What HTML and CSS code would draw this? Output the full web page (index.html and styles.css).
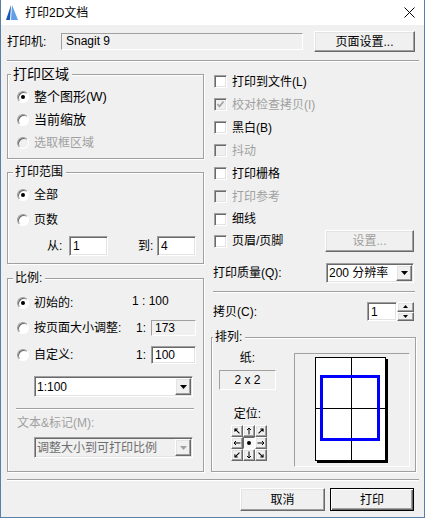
FILE: index.html
```html
<!DOCTYPE html>
<html lang="zh-CN">
<head>
<meta charset="utf-8">
<title>打印2D文档</title>
<link rel="stylesheet" href="styles.css">
</head>
<body>
<div class="window">
  <div class="titlebar">
    <svg class="app-icon" width="14" height="15" viewBox="0 0 14 15">
      <path d="M6 0 L1 15 L5 15 Z" fill="#1a56b8"/>
      <path d="M7 0 L13 15 L6 15 Z" fill="#62a0e6"/>
    </svg>
    <span class="title">打印2D文档</span>
    <svg class="close-x" width="11" height="11" viewBox="0 0 11 11"><path d="M0.5 0.5L10.5 10.5M10.5 0.5L0.5 10.5" stroke="#000" stroke-width="1"/></svg>
  </div>
  <div class="dialog">
    <div class="printer-row">
      <span class="printer-label">打印机:</span>
      <div class="printer-field">Snagit 9</div>
      <div class="btn btn-setup">页面设置...</div>
    </div>
    <div class="sep sep-top"></div>
    <div class="main">
      <div class="col-left">
        <div class="group g-area">
          <div class="legend legend-lg">打印区域</div>
          <div class="gbody gbody-area">
            <div class="row r23 big"><span class="radio on"></span>整个图形(W)</div>
            <div class="row r23 big"><span class="radio"></span>当前缩放</div>
            <div class="row r23 disabled"><span class="radio"></span>选取框区域</div>
          </div>
        </div>
        <div class="group g-range">
          <div class="legend">打印范围</div>
          <div class="gbody gbody-range">
            <div class="row h24"><span class="radio on"></span>全部</div>
            <div class="row h25"><span class="radio"></span>页数</div>
            <div class="range-row">
              <span class="from-label">从:</span>
              <div class="input w39">1</div>
              <span class="to-label">到:</span>
              <div class="input w39">4</div>
            </div>
          </div>
        </div>
        <div class="group g-scale">
          <div class="legend">比例:</div>
          <div class="gbody gbody-scale">
            <div class="srow h24">
              <span class="slabel"><span class="radio on"></span>初始的:</span>
              <span class="ratio-text">1 : 100</span>
            </div>
            <div class="srow h26">
              <span class="slabel"><span class="radio"></span>按页面大小调整:</span>
              <span class="one">1:</span>
              <div class="field-dis">173</div>
            </div>
            <div class="srow h28">
              <span class="slabel"><span class="radio"></span>自定义:</span>
              <span class="one">1:</span>
              <div class="input h18">100</div>
            </div>
            <div class="combo combo-scale">
              <span class="val">1:100</span>
              <span class="btn drop"><svg width="7" height="4" viewBox="0 0 7 4"><path d="M0 0H7L3.5 4Z" fill="#000"/></svg></span>
            </div>
            <div class="gsep"></div>
            <div class="text-mark">文本&amp;标记(M):</div>
            <div class="combo combo-scale combo-dis">
              <span class="val">调整大小到可打印比例</span>
              <span class="btn drop"><svg width="7" height="4" viewBox="0 0 7 4"><path d="M0 0H7L3.5 4Z" fill="#a0a0a0"/></svg></span>
            </div>
          </div>
        </div>
      </div>
      <div class="col-right">
        <div class="checks">
          <div class="crow"><span class="cb"></span>打印到文件(L)</div>
          <div class="crow disabled"><span class="cb"><svg width="9" height="9" viewBox="0 0 9 9"><path d="M1.5 4 L3.5 6.5 L7.5 1.5" fill="none" stroke="#a0a0a0" stroke-width="1.6"/></svg></span>校对检查拷贝(I)</div>
          <div class="crow"><span class="cb"></span>黑白(B)</div>
          <div class="crow disabled"><span class="cb"></span>抖动</div>
          <div class="crow"><span class="cb"></span>打印栅格</div>
          <div class="crow disabled"><span class="cb"></span>打印参考</div>
          <div class="crow h22"><span class="cb"></span>细线</div>
          <div class="crow h22"><span class="cb"></span>页眉/页脚<div class="btn btn-hf disabled">设置...</div></div>
        </div>
        <div class="quality-row">
          <span>打印质量(Q):</span>
          <div class="combo combo-q">
            <span class="val">200 分辨率</span>
            <span class="btn drop"><svg width="7" height="4" viewBox="0 0 7 4"><path d="M0 0H7L3.5 4Z" fill="#000"/></svg></span>
          </div>
        </div>
        <div class="sep sep-right"></div>
        <div class="copy-row">
          <span>拷贝(C):</span>
          <div class="spin">
            <div class="input spin-input">1</div>
            <div class="spin-btns">
              <span class="btn"><svg width="5" height="3" viewBox="0 0 5 3"><path d="M0 3H5L2.5 0Z" fill="#000"/></svg></span>
              <span class="btn"><svg width="5" height="3" viewBox="0 0 5 3"><path d="M0 0H5L2.5 3Z" fill="#000"/></svg></span>
            </div>
          </div>
        </div>
        <div class="group g-arrange">
          <div class="legend legend-arr">排列:</div>
          <div class="arr-body">
            <div class="arr-left">
              <div class="paper-label">纸:</div>
              <div class="paper-box">2 x 2</div>
              <div class="pos-label">定位:</div>
              <div class="pos-grid">
                <span class="btn pos"><svg width="8" height="8" viewBox="0 0 8 8"><g transform="rotate(-45 4 4)"><path d="M4 7.5V1M2 3L4 1L6 3" fill="none" stroke="#000"/></g></svg></span>
                <span class="btn pos"><svg width="8" height="8" viewBox="0 0 8 8"><path d="M4 7.5V1M2 3L4 1L6 3" fill="none" stroke="#000"/></svg></span>
                <span class="btn pos"><svg width="8" height="8" viewBox="0 0 8 8"><g transform="rotate(45 4 4)"><path d="M4 7.5V1M2 3L4 1L6 3" fill="none" stroke="#000"/></g></svg></span>
                <span class="btn pos"><svg width="8" height="8" viewBox="0 0 8 8"><g transform="rotate(-90 4 4)"><path d="M4 7.5V1M2 3L4 1L6 3" fill="none" stroke="#000"/></g></svg></span>
                <span class="pos pos-on"><svg width="8" height="8" viewBox="0 0 8 8"><circle cx="4" cy="4" r="2" fill="#000"/></svg></span>
                <span class="btn pos"><svg width="8" height="8" viewBox="0 0 8 8"><g transform="rotate(90 4 4)"><path d="M4 7.5V1M2 3L4 1L6 3" fill="none" stroke="#000"/></g></svg></span>
                <span class="btn pos"><svg width="8" height="8" viewBox="0 0 8 8"><g transform="rotate(-135 4 4)"><path d="M4 7.5V1M2 3L4 1L6 3" fill="none" stroke="#000"/></g></svg></span>
                <span class="btn pos"><svg width="8" height="8" viewBox="0 0 8 8"><g transform="rotate(180 4 4)"><path d="M4 7.5V1M2 3L4 1L6 3" fill="none" stroke="#000"/></g></svg></span>
                <span class="btn pos"><svg width="8" height="8" viewBox="0 0 8 8"><g transform="rotate(135 4 4)"><path d="M4 7.5V1M2 3L4 1L6 3" fill="none" stroke="#000"/></g></svg></span>
              </div>
            </div>
            <div class="preview">
              <svg width="114" height="112" viewBox="0 0 114 112">
                <rect x="22" y="5" width="71" height="104" fill="#000"/>
                <rect x="20.5" y="3.5" width="70" height="103" fill="#fff" stroke="#000"/>
                <path d="M56.5 3.5V106.5M20.5 54.5H90.5" stroke="#000"/>
                <rect x="26.5" y="22.5" width="57" height="63" fill="none" stroke="#0000ff" stroke-width="3"/>
              </svg>
            </div>
          </div>
        </div>
      </div>
    </div>
    <div class="sep sep-bottom"></div>
    <div class="actions">
      <div class="btn btn-cancel">取消</div>
      <div class="btn btn-default">打印</div>
    </div>
  </div>
</div>
</body>
</html>
```

FILE: styles.css
```css
* { box-sizing: border-box; }
body {
  margin: 0;
  font-family: "Liberation Sans", "Noto Sans CJK SC", sans-serif;
  font-size: 12px;
  line-height: 14px;
  color: #000;
  background: #f0f0f0;
}
.window {
  width: 425px;
  height: 518px;
  border: 1px solid #5b80a8;
  border-top: none;
  background: #f0f0f0;
  display: flex;
  flex-direction: column;
}
.titlebar {
  height: 25px;
  flex-shrink: 0;
  background: #fff;
  display: flex;
  align-items: center;
}
.app-icon { margin-left: 4px; }
.title { margin-left: 6px; }
.close-x { margin-left: auto; margin-right: 9px; }

.dialog {
  padding: 0 5px 0 6px;
  display: flex;
  flex-direction: column;
}
.printer-row {
  margin-top: 6px;
  height: 21px;
  display: flex;
  align-items: center;
}
.printer-label { width: 54px; }
.printer-field {
  width: 242px;
  height: 17px;
  border: 1px solid;
  border-color: #a0a0a0 #fff #fff #a0a0a0;
  padding-left: 4px;
  line-height: 15px;
}
.btn {
  background: #f0f0f0;
  border: 1px solid;
  border-color: #fff #696969 #696969 #fff;
  box-shadow: inset -1px -1px 0 #a0a0a0, inset 1px 1px 0 #e3e3e3;
  display: flex;
  align-items: center;
  justify-content: center;
}
.btn-setup { margin-left: 11px; width: 101px; height: 21px; }

.sep {
  height: 2px;
  border-top: 1px solid #a0a0a0;
  border-bottom: 1px solid #fff;
}
.sep-top { margin-top: 8px; }
.sep-bottom { margin-top: 7px; }

.main { display: flex; gap: 7px; }
.col-left { width: 197px; }
.col-right { width: 205px; }

.group {
  border: 1px solid #a0a0a0;
  box-shadow: 1px 1px 0 #fff, inset 1px 1px 0 #fff;
}
.legend {
  width: fit-content;
  height: 14px;
  margin: -8px 0 0 5px;
  padding: 0 3px 0 2px;
  background: #f0f0f0;
}
.legend-lg { font-size: 14px; margin-left: 3px; }
.legend-arr { margin-left: 1px; }

.g-area { margin-top: 12px; }
.gbody-area { padding: 4px 0 4px 9px; }
.row { display: flex; align-items: center; }
.r23 { height: 23px; }
.h24 { height: 24px; }
.h25 { height: 25px; }
.h26 { height: 26px; }
.h28 { height: 28px; }
.big { font-size: 13px; }
.disabled { color: #a0a0a0; }

.radio {
  width: 12px;
  height: 12px;
  flex-shrink: 0;
  border-radius: 50%;
  background: #fff;
  border: 1px solid;
  border-color: #a0a0a0 #fff #fff #a0a0a0;
  box-shadow: inset 1px 1px 0 #696969;
  margin-right: 5px;
  display: flex;
  align-items: center;
  justify-content: center;
}
.radio.on::after {
  content: "";
  width: 4px;
  height: 4px;
  border-radius: 50%;
  background: #000;
}
.disabled .radio { background: #f0f0f0; }

.g-range { margin-top: 13px; }
.gbody-range { padding: 4px 7px 7px 9px; }
.range-row {
  margin-top: 4px;
  height: 20px;
  display: flex;
  align-items: center;
}
.from-label { margin-left: 30px; width: 22px; }
.to-label { margin-left: 30px; width: 19px; }
.input {
  height: 20px;
  background: #fff;
  border: 1px solid;
  border-color: #a0a0a0 #fff #fff #a0a0a0;
  box-shadow: inset 1px 1px 0 #696969, inset -1px -1px 0 #e3e3e3;
  padding-left: 3px;
  display: flex;
  align-items: center;
}
.w39 { width: 39px; }
.input.h18 { height: 18px; }

.g-scale { margin-top: 14px; }
.gbody-scale { padding: 6px 7px 13px 9px; }
.srow {
  display: grid;
  grid-template-columns: 1fr 15px 45px;
  align-items: center;
}
.slabel { display: flex; align-items: center; }
.ratio-text { grid-column: 2 / 4; margin-left: -4px; margin-top: -4px; }
.field-dis {
  height: 16px;
  border: 1px solid;
  border-color: #a0a0a0 #fff #fff #a0a0a0;
  padding-left: 3px;
  line-height: 14px;
}
.combo {
  height: 21px;
  background: #fff;
  border: 1px solid;
  border-color: #a0a0a0 #fff #fff #a0a0a0;
  box-shadow: inset 1px 1px 0 #696969, inset -1px -1px 0 #e3e3e3;
  padding: 1px;
  display: flex;
}
.combo .val {
  flex: 1;
  display: flex;
  align-items: center;
  padding-left: 1px;
  white-space: nowrap;
  overflow: hidden;
}
.combo .drop { width: 16px; height: 100%; }
.combo-scale { margin: 7px 0 0 17px; width: 159px; }
.combo-dis { background: #f0f0f0; color: #6d6d6d; }
.gsep {
  margin: 11px 0 0 -1px;
  width: 178px;
  height: 2px;
  border-top: 1px solid #a0a0a0;
  border-bottom: 1px solid #fff;
}
.text-mark { margin-top: 6px; height: 14px; color: #a0a0a0; }

.checks { margin-top: 8px; padding-left: 3px; }
.crow { display: flex; align-items: center; height: 23px; }
.crow.h22 { height: 22px; }
.cb {
  width: 13px;
  height: 13px;
  flex-shrink: 0;
  background: #fff;
  border: 1px solid;
  border-color: #a0a0a0 #fff #fff #a0a0a0;
  box-shadow: inset 1px 1px 0 #696969, inset -1px -1px 0 #e3e3e3;
  margin-right: 5px;
  display: flex;
  align-items: center;
  justify-content: center;
}
.disabled .cb { background: #f0f0f0; }
.btn-hf { margin-left: auto; margin-right: 2px; width: 89px; height: 22px; }

.quality-row {
  margin-top: 11px;
  height: 20px;
  padding-left: 2px;
  display: flex;
  align-items: center;
}
.combo-q { margin-left: auto; margin-right: 2px; width: 88px; height: 20px; }
.sep-right { margin: 8px 1px 0 2px; }

.copy-row {
  margin-top: 9px;
  height: 19px;
  padding-left: 2px;
  display: flex;
  align-items: center;
}
.spin { margin-left: auto; margin-right: 2px; display: flex; height: 19px; }
.spin-input { width: 30px; height: 19px; }
.spin-btns { width: 17px; display: flex; flex-direction: column; }
.spin-btns .btn { flex: 1; }

.g-arrange { margin-top: 16px; }
.arr-body {
  display: flex;
  align-items: flex-start;
  padding: 0 5px 4px 7px;
}
.arr-left {
  width: 57px;
  display: flex;
  flex-direction: column;
  align-items: center;
}
.paper-label { margin-top: 7px; }
.paper-box {
  margin-top: 5px;
  width: 57px;
  height: 20px;
  border: 1px solid;
  border-color: #a0a0a0 #fff #fff #a0a0a0;
  display: flex;
  align-items: center;
  justify-content: center;
}
.pos-label { margin-top: 17px; }
.pos-grid {
  margin-top: 4px;
  align-self: flex-start;
  margin-left: 12px;
  display: grid;
  grid-template-columns: repeat(3, 12px);
  grid-auto-rows: 12px;
}
.pos-on {
  background: #f8f8f8;
  border: 1px solid;
  border-color: #696969 #fff #fff #696969;
  display: flex;
  align-items: center;
  justify-content: center;
}
.preview {
  margin: 9px 0 0 18px;
  width: 116px;
  height: 114px;
  border: 1px solid;
  border-color: #a0a0a0 #fff #fff #a0a0a0;
}
.preview svg { display: block; }

.actions {
  margin-top: 7px;
  display: flex;
  justify-content: flex-end;
  gap: 5px;
  padding-right: 5px;
}
.btn-cancel { width: 85px; height: 23px; }
.btn-default {
  width: 84px;
  height: 23px;
  border-color: #000;
  box-shadow: inset 1px 1px 0 #fff, inset -1px -1px 0 #696969, inset -2px -2px 0 #a0a0a0;
}
```
